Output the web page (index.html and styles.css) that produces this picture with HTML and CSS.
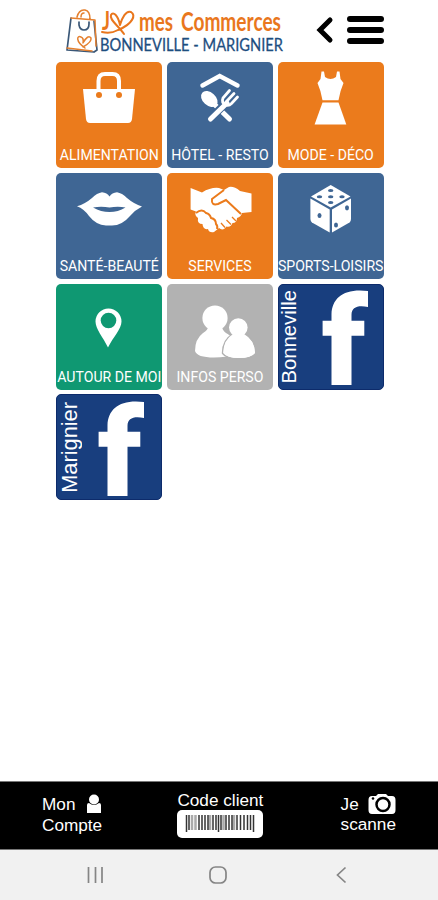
FILE: index.html
```
<!DOCTYPE html>
<html lang="fr">

<head>
    <meta charset="utf-8">
    <title>J'aime mes Commerces</title>
    <link rel="stylesheet" href="styles.css">
</head>

<body>
    <header class="header">
        <svg class="logo" viewBox="0 -6 220 62">
            <g class="bag-blue">
                <path d="M5 12 L1 44 L28 46 M28 15 L31 44 L28 46" />
                <path d="M13 16 v3 q1 5 5 5 q5 0 5 -6 v-2" />
            </g>
            <g class="bag-orange">
                <path d="M5 12 L29 14 L30 40 M11 11 q2 -8 8 -7 q5 1 5 9 M15 11 q0 -4 3 -4 M1 42 L26 45" />
                <path d="M19 42 C9 35 11 29 15 31 Q18 32 17 37 Q22 28 25 32 Q26 36 17 41" />
            </g>
            <path class="heart" d="M36 26 q9 2 16 -2 C67 18 70 9 65 6 C60 4 56 12 54 19 C52 9 47 5 45 9 C43 14 52 19 58 28" />
            <text class="brand" x="36" y="24" textLength="8" lengthAdjust="spacingAndGlyphs">J</text>
            <text class="brand" x="73" y="25" textLength="34" lengthAdjust="spacingAndGlyphs">mes</text>
            <text class="brand" x="115" y="25" textLength="100" lengthAdjust="spacingAndGlyphs">Commerces</text>
            <text class="city" x="34" y="44.500" textLength="183" lengthAdjust="spacingAndGlyphs">BONNEVILLE - MARIGNIER</text>
        </svg>
        <svg class="back" viewBox="0 0 18 28">
            <path d="M14 4 L4 14 L14 24" />
        </svg>
        <div class="burger">
            <span></span>
            <span></span>
            <span></span>
        </div>
    </header>

    <main class="tiles">
        <a class="tile orange">
            <svg viewBox="0 0 106 82">
                <path d="M27 27 H79 L76 57 Q75.500 61 72 61 H34 Q30.500 61 30 57 Z" />
                <circle class="hole" cx="43" cy="33" r="3" />
                <circle class="hole" cx="63" cy="33" r="3" />
                <path class="line" d="M42.500 27 V19 Q42.500 12 49 12 H56.500 Q63 12 63 19 V27" />
            </svg>
            <span>ALIMENTATION</span>
        </a>
        <a class="tile blue">
            <svg viewBox="0 0 106 82">
                <path class="line roof" d="M35.500 23.500 L52.700 14 L70.500 23.500" />
                <path class="line handle" d="M62.500 57 L45 40" />
                <path class="cut" d="M44 56 L59 41" />
                <path class="line handle" d="M43.500 57 L60 41" />
                <ellipse cx="42.300" cy="37" rx="9.500" ry="6.500" transform="rotate(42 42.300 37)" />
                <path class="line tine" d="M62.500 28.500 L56 36 Q54 41 59 43 Q62 44 64.500 41.500 L70.500 35 M67 31.500 L59 40" />
            </svg>
            <span>HÔTEL - RESTO</span>
        </a>
        <a class="tile orange">
            <svg viewBox="0 0 106 82">
                <path d="M43.500 9.500 H46 L47 15 Q52.500 19 58 15 L59 9.500 H61.500 L62.500 17 L65.500 21 Q62 29 60.500 38.300 H44.500 Q43 29 39.500 21 L42.500 17 Z" />
                <path d="M44.500 40.500 H60.500 L68.300 62.400 H36.600 Z" />
            </svg>
            <span>MODE - DÉCO</span>
        </a>
        <a class="tile blue">
            <svg viewBox="0 0 106 82">
                <path d="M21 33.300 Q29 31 36 25 Q41 20 46 19.200 Q51 19.500 53.500 23.500 Q56 19.500 61 19.200 Q66 20 71 25 Q78 31 86 33.500 Q79 37 74 43 Q66 52.500 56 52.500 H50 Q40 52 33 43 Q28 36 21 33.300 Z" />
                <path class="hole" d="M37 34.500 Q45 33 53.500 34.500 Q62 33 69.500 34.500 Q62 39 53.500 39 Q45 39 37 34.500 Z" />
            </svg>
            <span>SANTÉ-BEAUTÉ</span>
        </a>
        <a class="tile orange">
            <svg viewBox="0 0 106 82">
                <path d="M23.600 15 L35 19.500 Q44 14 52 15 L57 17 L62 14 Q67 13 73 18 L84.500 20.500 V39 L75 40 Q74 44 70 45 Q70 50 65.500 50 Q64 54.500 59.500 53.500 Q56 58.500 52 55 L47 59 Q42 60 41 56 Q36 57 35.500 51 Q30 51 31 45 Q27 42 29 38.500 L23.600 36.500 Z" />
                <path class="gap" d="M57 17 L45 26 Q44 33 51 31 L59 27 L74 41" />
                <path class="gap" d="M29 40 Q35 35 39 40 Q43 41 44 45 Q49 46 49 51 Q51 53 50 56" />
                <path class="gap thin" d="M65 44 L69 48 M59.500 47 L64 51.500 M54 50 L58 54.500" />
            </svg>
            <span>SERVICES</span>
        </a>
        <a class="tile blue">
            <svg viewBox="0 0 106 82">
                <path d="M52.700 12 L72.500 23.500 L52.700 34.500 L33 23.500 Z" />
                <path d="M32.400 25.500 L51.700 36.500 V59.500 L34 49.500 Q32.400 48 32.400 46 Z" />
                <path d="M73 25.500 L54 36.500 V59.500 L71.500 49.500 Q73 48 73 46 Z" />
                <g class="hole">
                    <ellipse cx="52.700" cy="17.500" rx="2.700" ry="1.500" />
                    <ellipse cx="41.500" cy="23.700" rx="2.700" ry="1.500" />
                    <ellipse cx="52.700" cy="23.700" rx="2.700" ry="1.500" />
                    <ellipse cx="64" cy="23.700" rx="2.700" ry="1.500" />
                    <ellipse cx="52.700" cy="29.500" rx="2.700" ry="1.500" />
                    <ellipse cx="41.500" cy="42.500" rx="2" ry="2.600" />
                    <ellipse cx="69" cy="34.800" rx="2" ry="2.600" />
                    <ellipse cx="58" cy="52" rx="2" ry="2.600" />
                </g>
            </svg>
            <span>SPORTS-LOISIRS</span>
        </a>
        <a class="tile green">
            <svg viewBox="0 0 106 82">
                <path d="M52.500 24.400 A13 13 0 0 1 65.500 37.400 C65.500 45 57 53 52 63.400 C47 53 39.500 45 39.500 37.400 A13 13 0 0 1 52.500 24.400 Z" />
                <circle class="hole" cx="52.500" cy="36.500" r="7.800" />
            </svg>
            <span>AUTOUR DE MOI</span>
        </a>
        <a class="tile grey">
            <svg viewBox="0 0 106 82">
                <circle cx="48" cy="34" r="12.600" />
                <path d="M41 43 Q41 46 36 49 Q28 55 28 67 Q30 73.500 47 73.500 Q60 73.500 67 70 Q68 53 59 49 Q55 46 55 42 Z" />
                <path class="halo" d="M66 51 Q56.500 56 56.300 69 Q60 74 72 74 Q84 74 88 69 Q87.500 56 77 51 Z" />
                <circle class="halo" cx="71.300" cy="43.500" r="9.300" />
                <path d="M66 50 Q56.500 56 56.300 69 Q60 74 72 74 Q84 74 88 69 Q87.500 56 77 50 Z" />
            </svg>
            <span>INFOS PERSO</span>
        </a>
        <a class="tile fb">
            <span class="town">Bonneville</span>
            <svg viewBox="22 0 84 106">
                <path d="M53.500 101 V51.700 H44.600 V36.700 H53.500 V30 C54 14 66 4 90 7 V23 C80 21 73.500 23 73.500 31 V36.700 H86.300 V51.700 H73.500 V101 Z" />
            </svg>
        </a>
        <a class="tile fb">
            <span class="town marignier">Marignier</span>
            <svg viewBox="22 0 84 106">
                <path d="M51.500 102 V52.700 H42.600 V37.700 H51.500 V31 C52 15 64 5 88 8 V24 C78 22 71.500 24 71.500 32 V37.700 H84.300 V52.700 H71.500 V102 Z" />
            </svg>
        </a>
    </main>

    <footer class="bar">
        <div class="item">
            <div class="row">Mon
                <svg class="user" viewBox="0 0 14 20">
                    <circle cx="7" cy="5.500" r="5" />
                    <path d="M0 11 Q0 9 2 9 Q7 13 12 9 Q14 9 14 11 V19 H0 Z" />
                </svg>
            </div>
            <div class="row">Compte</div>
        </div>
        <div class="item code">
            <div>Code client</div>
            <svg class="barcode" viewBox="0 0 86 28">
                <rect width="86" height="28" rx="5" />
                <path class="pale" d="M15 5 V20 M18.500 5 V20 M33 5 V20 M46.500 5 V20 M57 5 V20" />
                <path class="bars" d="M9.500 5 V22 M12 5 V20 M22 5 V20 M25 5 V20 M28 5 V20 M31 5 V20 M36 5 V20 M39 5 V20 M41.500 5 V22 M44 5 V20 M49 5 V20 M52 5 V20 M55 5 V20 M60 5 V20 M63.500 5 V20 M67 5 V20 M70.500 5 V20 M73.500 5 V20 M76.500 5 V22" />
            </svg>
        </div>
        <div class="item">
            <div class="row">Je
                <svg class="camera" viewBox="0 0 28 22">
                    <path d="M4 3 H8 L10 1 H18 L20 3 H24 Q27.500 3 27.500 7 V17 Q27.500 21 24 21 H4 Q0.500 21 0.500 17 V7 Q0.500 3 4 3 Z" />
                    <circle class="lens" cx="15" cy="11.500" r="6.500" />
                    <circle class="dot" cx="5" cy="5.500" r="1.300" />
                </svg>
            </div>
            <div class="row scan">scanne</div>
        </div>
    </footer>

    <nav class="android">
        <svg viewBox="0 0 20 20">
            <path d="M3.500 2 V18 M10.500 2 V18 M17 2 V18" />
        </svg>
        <svg viewBox="0 0 20 20">
            <rect x="2" y="2" width="16" height="16" rx="5.500" />
        </svg>
        <svg viewBox="0 0 20 20">
            <path d="M14.500 2.500 L6.500 10 L14.500 17.500" />
        </svg>
    </nav>
</body>

</html>
```
FILE: styles.css
```
* {
    padding: 0;
    margin: 0;
    box-sizing: border-box;
}

body {
    height: 900px;
    display: flex;
    flex-direction: column;
    background: #fff;
    font-family: "Liberation Sans", Arial, sans-serif;
    overflow: hidden;
}

svg {
    display: block;
    flex: none;
}

/* header */
.header {
    height: 62px;
    padding: 0 54px 0 65.5px;
    display: flex;
    align-items: flex-start;
}

.logo {
    width: 220px;
    height: 62px;
    overflow: visible;
    fill: none;
    stroke-linecap: round;
    stroke-linejoin: round;
}

.bag-blue {
    stroke: #3b5878;
    stroke-width: 1.7;
}

.bag-orange {
    stroke: #e5802f;
    stroke-width: 1.5;
}

.heart {
    stroke: #e9771d;
    stroke-width: 2;
}

.brand {
    font: bold 27px Lato, sans-serif;
    fill: #e9771d;
}

.city {
    font: 18px Lato, sans-serif;
    fill: #1d4e7f;
    stroke: #1d4e7f;
    stroke-width: .3;
}

.back {
    width: 18px;
    height: 28px;
    margin: 16px 0 0 30.5px;
    fill: none;
    stroke: #000;
    stroke-width: 5;
    stroke-linecap: round;
}

.burger {
    width: 37px;
    height: 28px;
    margin: 16px 0 0 13px;
    display: flex;
    flex-direction: column;
    justify-content: space-between;
}

.burger span {
    height: 6px;
    border-radius: 3px;
    background: #000;
}

/* tiles */
.tiles {
    flex: 1;
    display: grid;
    grid-template-columns: repeat(3, 106px);
    grid-auto-rows: 106px;
    align-content: start;
    gap: 4.7px;
    padding-left: 56.3px;
    padding-top: .3px;
}

.tile {
    --color: #eb7b1c;
    display: flex;
    flex-direction: column;
    align-items: center;
    border-radius: 5px;
    background: var(--color);
    color: #fff;
    font: 14.1px/22px Roboto, sans-serif;
    white-space: nowrap;
}

.tile svg {
    width: 106px;
    height: 82px;
    fill: #fff;
}

.blue {
    --color: #3f6694;
}

.green {
    --color: #0f9872;
}

.grey {
    --color: #b2b2b2;
}

.tile .hole {
    fill: var(--color);
}

.tile .line {
    fill: none;
    stroke: #fff;
    stroke-width: 4;
    stroke-linecap: round;
}

.tile .roof {
    stroke-width: 4.5;
}

.tile .handle {
    stroke-width: 5;
}

.tile .tine {
    stroke-width: 2.8;
}

.tile .cut {
    stroke: var(--color);
    stroke-width: 8;
}

.tile .gap {
    fill: none;
    stroke: var(--color);
    stroke-width: 2;
}

.tile .thin {
    stroke-width: 1.3;
}

.tile .halo {
    stroke: var(--color);
    stroke-width: 3;
    paint-order: stroke;
}

.fb {
    --color: #183e7e;
    flex-direction: row;
    border: 1px solid #0d2b6b;
}

.fb svg {
    width: 84px;
    height: 106px;
}

.town {
    width: 21px;
    writing-mode: vertical-rl;
    transform: rotate(180deg);
    text-align: center;
    font: 20.3px/21px "Liberation Sans", Arial, sans-serif;
}

.marignier {
    font-size: 21.8px;
    line-height: 25px;
    width: 24px;
    margin-right: -3px;
}

/* bottom bar */
.bar {
    height: 69px;
    padding: 12px 42px 0;
    display: flex;
    justify-content: space-between;
    background: #000;
    border-top: 1px solid #777;
    border-bottom: 1px solid #777;
    color: #fff;
    font-size: 17.2px;
    line-height: 20.5px;
}

.row {
    height: 20.5px;
    display: flex;
    justify-content: space-between;
}

.scan {
    margin-top: -1px;
}

.bar svg {
    fill: #fff;
}

.user {
    width: 14px;
    height: 20px;
    margin-right: 1.5px;
}

.camera {
    width: 28px;
    height: 22px;
    margin-top: -1px;
}

.camera .lens {
    stroke: #000;
    stroke-width: 2.5;
}

.camera .dot {
    fill: #000;
}

.code {
    margin: -4px 1px 0 -1px;
}

.barcode {
    width: 86px;
    height: 28px;
    margin-top: -1px;
}

.bars {
    stroke: #333;
    stroke-width: 1.5;
}

.pale {
    stroke: #aaa;
    stroke-width: 2.5;
}

/* system buttons */
.android {
    height: 50px;
    padding: 0 87px 0 85px;
    display: flex;
    align-items: center;
    justify-content: space-between;
    background: #f1f1f1;
}

.android svg {
    width: 20px;
    height: 20px;
    fill: none;
    stroke: #858585;
    stroke-width: 1.7;
}
```
